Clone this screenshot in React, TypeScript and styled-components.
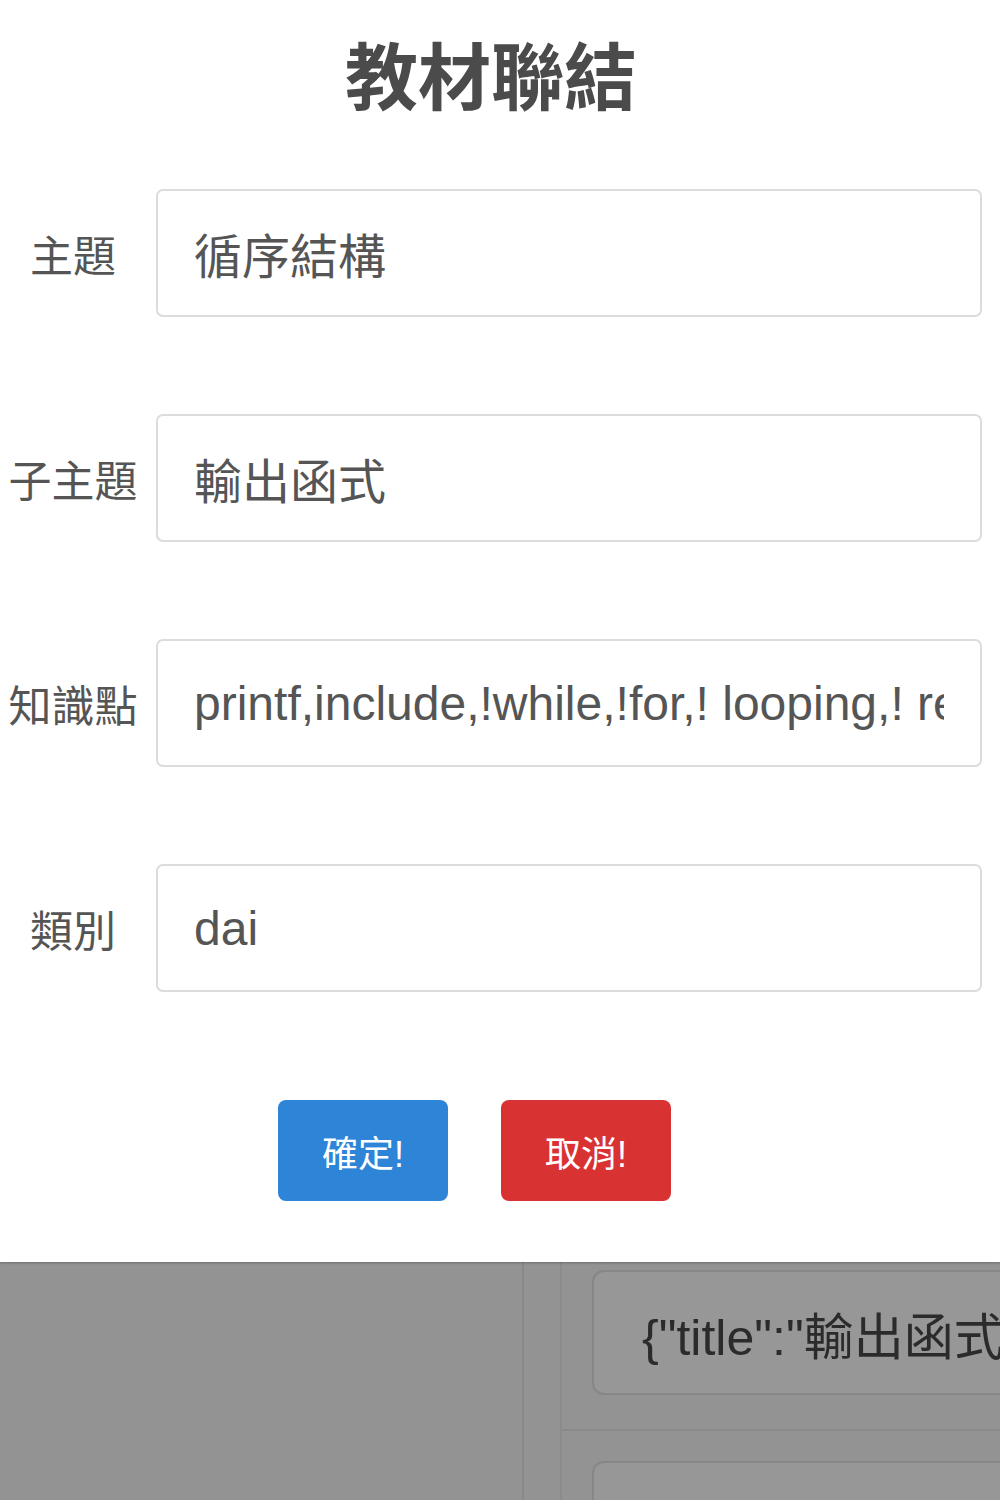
import React, { useState } from "react";
import styled, { createGlobalStyle } from "styled-components";

const GlobalStyle = createGlobalStyle`
    html, body {
        margin: 0;
        padding: 0;
        background: #939393;
    }
    body {
        font-family: "Liberation Sans", "Noto Sans CJK TC", sans-serif;
    }
`;

const Page = styled.div`
    width: 1000px;
    height: 1500px;
    overflow: hidden;
    display: flex;
    flex-direction: column;
`;

const Modal = styled.section`
    flex-shrink: 0;
    background: #fff;
    height: 1262px;
    box-sizing: border-box;
    padding: 35px 18px 0 0;
    box-shadow: 0 1px 2px rgba(0, 0, 0, 0.25);
    position: relative;
    z-index: 1;
`;

const Title = styled.h1`
    margin: 0 0 80px;
    text-align: center;
    font-family: "Noto Sans CJK TC", sans-serif;
    font-size: 73px;
    line-height: 74px;
    font-weight: 700;
    color: #4b4b4b;
`;

const Form = styled.form`
    display: flex;
    flex-direction: column;
    gap: 97px;
`;

const Row = styled.div`
    display: grid;
    grid-template-columns: 146px 1fr;
    column-gap: 10px;
    align-items: center;
`;

const Label = styled.label`
    text-align: center;
    font-family: "Noto Sans CJK TC", sans-serif;
    font-size: 43px;
    color: #555;
    white-space: nowrap;
`;

const Field = styled.input`
    box-sizing: border-box;
    width: 100%;
    height: 128px;
    padding: 0 36px;
    border: 2px solid #dcdcdc;
    border-radius: 7px;
    background: #fff;
    font-family: "Liberation Sans", "Noto Sans CJK TC", sans-serif;
    font-size: 48px;
    color: #555;
    outline: none;
`;

const Actions = styled.div`
    display: flex;
    justify-content: center;
    gap: 53px;
    margin-top: 108px;
    padding-right: 33px;
`;

const Button = styled.button<{ $tone: "ok" | "cancel" }>`
    width: 170px;
    height: 101px;
    border: 0;
    border-radius: 8px;
    background: ${(p) => (p.$tone === "ok" ? "#2e84d6" : "#d93233")};
    color: #fff;
    font-family: "Liberation Sans", "Noto Sans CJK TC", sans-serif;
    font-size: 36px;
    cursor: pointer;
`;

const Backdrop = styled.div`
    flex: 1;
    min-height: 0;
    display: flex;
    background: #939393;
`;

const SidePane = styled.div`
    flex-shrink: 0;
    width: 522px;
    border-right: 2px solid #898989;
`;

const Gutter = styled.div`
    flex-shrink: 0;
    width: 36px;
    border-right: 2px solid #8b8b8b;
`;

const Content = styled.div`
    flex: 1;
    min-width: 0;
    display: flex;
    flex-direction: column;
`;

const Block = styled.div<{ $first?: boolean }>`
    padding: ${(p) => (p.$first ? "8px" : "30px")} 0 34px 30px;
    border-bottom: ${(p) => (p.$first ? "2px solid #8a8a8a" : "none")};
`;

const JsonBox = styled.div`
    height: 125px;
    box-sizing: border-box;
    margin-right: -20px;
    border: 2px solid #878787;
    border-radius: 12px;
    background: #979797;
    display: flex;
    align-items: center;
    padding-left: 48px;
    font-family: "Liberation Sans", "Noto Sans CJK TC", sans-serif;
    font-size: 50px;
    color: #2b2b2b;
    white-space: nowrap;
    overflow: hidden;
`;

const fields = [
    { label: "主題", value: "循序結構" },
    { label: "子主題", value: "輸出函式" },
    { label: "知識點", value: "printf,include,!while,!for,! looping,! repeat" },
    { label: "類別", value: "dai" },
];

const App = () => {
    const [values, setValues] = useState(fields.map((f) => f.value));

    return (
        <Page>
            <GlobalStyle />
            <Modal>
                <Title>教材聯結</Title>
                <Form onSubmit={(e) => e.preventDefault()}>
                    {fields.map((f, idx) => (
                        <Row key={f.label}>
                            <Label>{f.label}</Label>
                            <Field
                                value={values[idx]}
                                onChange={(e) => {
                                    const next = [...values];
                                    next[idx] = e.target.value;
                                    setValues(next);
                                }}
                            />
                        </Row>
                    ))}
                </Form>
                <Actions>
                    <Button $tone="ok">確定!</Button>
                    <Button $tone="cancel">取消!</Button>
                </Actions>
            </Modal>
            <Backdrop>
                <SidePane />
                <Gutter />
                <Content>
                    <Block $first>
                        <JsonBox>{`{"title":"輸出函式"}`}</JsonBox>
                    </Block>
                    <Block>
                        <JsonBox />
                    </Block>
                </Content>
            </Backdrop>
        </Page>
    );
};

export default App;
